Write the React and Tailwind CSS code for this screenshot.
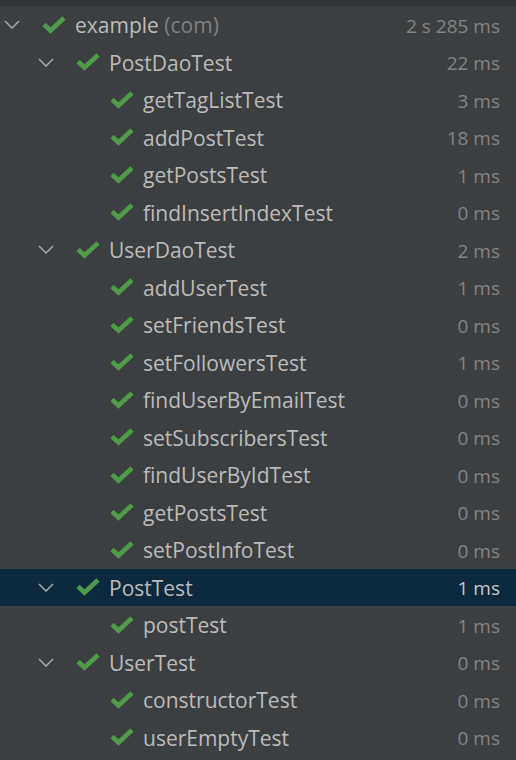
const rows = [
	{ level: 0, name: "example", suffix: "(com)", time: "2 s 285 ms", group: true },
	{ level: 1, name: "PostDaoTest", time: "22 ms", group: true },
	{ level: 2, name: "getTagListTest", time: "3 ms" },
	{ level: 2, name: "addPostTest", time: "18 ms" },
	{ level: 2, name: "getPostsTest", time: "1 ms" },
	{ level: 2, name: "findInsertIndexTest", time: "0 ms" },
	{ level: 1, name: "UserDaoTest", time: "2 ms", group: true },
	{ level: 2, name: "addUserTest", time: "1 ms" },
	{ level: 2, name: "setFriendsTest", time: "0 ms" },
	{ level: 2, name: "setFollowersTest", time: "1 ms" },
	{ level: 2, name: "findUserByEmailTest", time: "0 ms" },
	{ level: 2, name: "setSubscribersTest", time: "0 ms" },
	{ level: 2, name: "findUserByIdTest", time: "0 ms" },
	{ level: 2, name: "getPostsTest", time: "0 ms" },
	{ level: 2, name: "setPostInfoTest", time: "0 ms" },
	{ level: 1, name: "PostTest", time: "1 ms", group: true, selected: true },
	{ level: 2, name: "postTest", time: "1 ms" },
	{ level: 1, name: "UserTest", time: "0 ms", group: true },
	{ level: 2, name: "constructorTest", time: "0 ms" },
	{ level: 2, name: "userEmptyTest", time: "0 ms" },
];

const indent = ["pl-[4px]", "pl-[38px]", "pl-[72px]"];

const Chevron = () => (
	<svg width="16" height="9" viewBox="0 0 16 9" fill="none">
		<polyline points="1,1 8,8 15,1" stroke="#a3a5a7" strokeWidth="1.6" />
	</svg>
);

const Check = () => (
	<svg width="24" height="18" viewBox="0 0 24 18" fill="none">
		<polyline points="2,8.5 8.5,14.5 22,2" stroke="#4f9b4a" strokeWidth="4.6" />
	</svg>
);

export default function App() {
	return (
		<div
			className="w-[516px] h-[760px] bg-[#3c3f41] overflow-hidden"
			style={{ fontFamily: '"Open Sans", "Noto Sans", sans-serif' }}
		>
			{/* top edge */}
			<div className="h-[6px] bg-[#323436] border-b border-[#2f3133]"></div>
			{rows.map((r, i) => (
				<div
					key={i}
					className={`flex items-center h-[37.5px] pr-[16px] ${indent[r.level]} ${
						r.selected ? "bg-[#0d293e]" : ""
					}`}
				>
					<div className="w-[38px] shrink-0 flex">{r.group && <Chevron />}</div>
					<Check />
					<span className="ml-[9px] pt-[2px] text-[21px] text-[#bbbbbb] whitespace-nowrap">
						{r.name}
						{r.suffix && <span className="text-[#808080]"> {r.suffix}</span>}
					</span>
					<span
						className={`ml-auto pt-[2px] text-[19px] whitespace-nowrap ${
							r.selected ? "text-[#c8c8c8]" : "text-[#848484]"
						}`}
					>
						{r.time}
					</span>
				</div>
			))}
		</div>
	);
}
